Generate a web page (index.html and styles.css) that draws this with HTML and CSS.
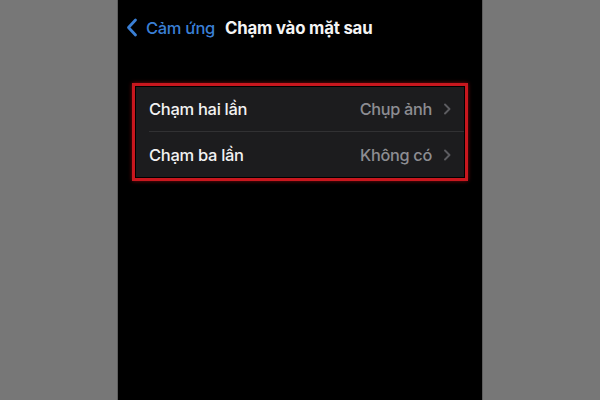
FILE: index.html
```html
<!DOCTYPE html>
<html lang="vi">
<head>
<meta charset="utf-8">
<link rel="stylesheet" href="styles.css">
</head>
<body>
<div class="phone">
  <header class="nav">
    <a class="back">
      <svg class="back-icon" width="13" height="19" viewBox="0 0 13 19"><path d="M10.5 2 L3.5 9.5 L10.5 17" fill="none" stroke="#3a7fd5" stroke-width="2.8" stroke-linecap="round" stroke-linejoin="round"/></svg>
      <span class="back-label">Cảm ứng</span>
    </a>
    <h1 class="title">Chạm vào mặt sau</h1>
  </header>
  <div class="highlight">
    <div class="group">
      <div class="row">
        <span class="label">Chạm hai lần</span>
        <span class="value">Chụp ảnh</span>
        <svg class="chev" width="8" height="12" viewBox="0 0 8 12"><path d="M2 1.5 L6.5 6 L2 10.5" fill="none" stroke="#5c5c60" stroke-width="1.9" stroke-linecap="round" stroke-linejoin="round"/></svg>
      </div>
      <div class="row">
        <span class="label">Chạm ba lần</span>
        <span class="value">Không có</span>
        <svg class="chev" width="8" height="12" viewBox="0 0 8 12"><path d="M2 1.5 L6.5 6 L2 10.5" fill="none" stroke="#5c5c60" stroke-width="1.9" stroke-linecap="round" stroke-linejoin="round"/></svg>
      </div>
    </div>
  </div>
</div>
</body>
</html>
```

FILE: styles.css
```css
html, body {
  margin: 0;
  padding: 0;
  height: 100%;
}
body {
  background: #777777;
  font-family: Inter, "Noto Sans", sans-serif;
}
.phone {
  width: 364px;
  height: 400px;
  margin: 0 auto;
  background: #000;
  border-left: 1px solid #5e5e5e;
  border-right: 1px solid #5e5e5e;
  box-sizing: content-box;
}
.nav {
  display: flex;
  align-items: center;
  padding: 18px 0 0 7px;
  height: 19px;
}
.back {
  display: flex;
  align-items: center;
  gap: 8px;
}
.back-label {
  color: #3a7fd5;
  font-size: 16.5px;
  font-weight: 500;
  letter-spacing: -0.3px;
}
.title {
  margin: 0 0 0 10px;
  color: #f4f4f4;
  font-size: 16.8px;
  font-weight: 700;
  letter-spacing: -0.2px;
}
.highlight {
  margin: 46px 0 0 14px;
  width: 330px;
  border: 3px solid #c8171e;
  box-shadow: 0 0 4px rgba(220, 20, 30, 0.55);
}
.group {
  background: #1c1c1e;
  margin: 1px;
}
.row {
  display: flex;
  align-items: center;
  height: 45px;
  margin-left: 13px;
  padding-right: 13px;
}
.row:first-child {
  height: 44px;
}
.row + .row {
  border-top: 1px solid #313133;
}
.label {
  flex: 1;
  color: #f2f2f2;
  font-size: 16.5px;
  font-weight: 500;
  letter-spacing: -0.3px;
}
.value {
  color: #8d8d92;
  font-size: 16.3px;
  font-weight: 500;
  letter-spacing: -0.3px;
  margin-right: 11px;
}
.chev {
  display: block;
}
```
